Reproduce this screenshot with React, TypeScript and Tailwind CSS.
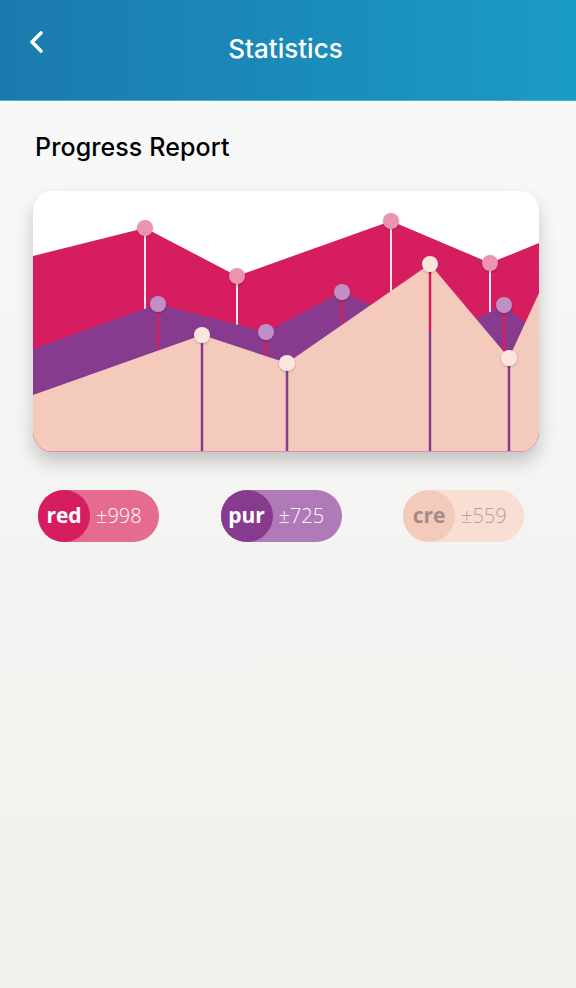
import React from "react";

const RED = "#d61d5f";
const PUR = "#873b8f";
const CRE = "#f4cabd";

function Chart() {
  const redPts = "0,65 112,37 204,85 358,30 457,72 506,52 506,261 0,261";
  const purPts = "0,158 125,113 233,141 309,101 407,146 471,114 506,144 506,261 0,261";
  const crePts = "0,204 169,144 254,172 397,73 476,167 506,102 506,261 0,261";
  const redDots: [number, number][] = [
    [112, 37],
    [204, 85],
    [358, 30],
    [457, 72],
  ];
  const purDots: [number, number][] = [
    [125, 113],
    [233, 141],
    [309, 101],
    [471, 114],
  ];
  const creDots: [number, number][] = [
    [169, 144],
    [254, 172],
    [397, 73],
    [476, 167],
  ];
  return (
    <svg width="506" height="261" viewBox="0 0 506 261" className="block">
      <defs>
        <filter id="ds" x="-50%" y="-50%" width="200%" height="200%">
          <feDropShadow dx="0" dy="1" stdDeviation="0.8" floodColor="#000" floodOpacity="0.25" />
        </filter>
      </defs>
      <rect x="0" y="0" width="506" height="261" fill="#ffffff" />
      <polygon points={redPts} fill={RED} />
      <line x1="112" y1="37" x2="112" y2="120" stroke="#fbe7ec" strokeWidth="2" />
      <line x1="204" y1="85" x2="204" y2="140" stroke="#fbe7ec" strokeWidth="2" />
      <line x1="358" y1="30" x2="358" y2="100" stroke="#fbe7ec" strokeWidth="2" />
      <line x1="457" y1="72" x2="457" y2="135" stroke="#fbe7ec" strokeWidth="2" />
      <polygon points={purPts} fill={PUR} />
      <line x1="125" y1="113" x2="125" y2="165" stroke={RED} strokeWidth="2.5" />
      <line x1="233" y1="141" x2="233" y2="172" stroke={RED} strokeWidth="2.5" />
      <line x1="309" y1="101" x2="309" y2="135" stroke={RED} strokeWidth="2.5" />
      <line x1="471" y1="114" x2="471" y2="170" stroke={RED} strokeWidth="2.5" />
      <polygon points={crePts} fill={CRE} />
      <line x1="169" y1="144" x2="169" y2="261" stroke={PUR} strokeWidth="2.5" />
      <line x1="254" y1="172" x2="254" y2="261" stroke={PUR} strokeWidth="2.5" />
      <line x1="397" y1="73" x2="397" y2="140" stroke={RED} strokeWidth="2.5" />
      <line x1="397" y1="140" x2="397" y2="261" stroke={PUR} strokeWidth="2.5" />
      <line x1="476" y1="167" x2="476" y2="261" stroke={PUR} strokeWidth="2.5" />
      {redDots.map(([x, y], i) => (
        <circle key={"r" + i} cx={x} cy={y} r="8" fill="#ec93ad" filter="url(#ds)" />
      ))}
      {purDots.map(([x, y], i) => (
        <circle key={"p" + i} cx={x} cy={y} r="8" fill="#c08fc5" filter="url(#ds)" />
      ))}
      {creDots.map(([x, y], i) => (
        <circle key={"c" + i} cx={x} cy={y} r="8" fill="#fbe6dd" filter="url(#ds)" />
      ))}
      <line x1="0" y1="260.5" x2="506" y2="260.5" stroke="#dc8bb0" strokeWidth="1" />
    </svg>
  );
}

function Pill({
  label,
  value,
  circle,
  bg,
  labelColor,
  valueColor,
}: {
  label: string;
  value: string;
  circle: string;
  bg: string;
  labelColor: string;
  valueColor: string;
}) {
  return (
    <div
      className="flex h-[52px] w-[121px] items-center rounded-full"
      style={{ backgroundColor: bg }}
    >
      <div
        className="flex h-[52px] w-[52px] shrink-0 items-center justify-center rounded-full text-[21px] font-bold"
        style={{ backgroundColor: circle, color: labelColor }}
      >
        {label}
      </div>
      <div className="ml-[6px] text-[20px] font-light" style={{ color: valueColor }}>
        {value}
      </div>
    </div>
  );
}

export default function App() {
  return (
    <div
      className="flex min-h-[988px] w-[576px] flex-col bg-gradient-to-b from-[#f8f9f9] to-[#f0f0ec]"
      style={{ fontFamily: "Inter, 'Open Sans', sans-serif" }}
    >
      <header className="relative flex h-[101px] items-start justify-center border-b border-[#52b0d6] bg-gradient-to-r from-[#1b7aad] to-[#1a9cc5]">
        <button className="absolute left-[21px] top-[24px] p-1">
          <svg width="22" height="28" viewBox="0 0 22 28">
            <polyline
              points="16,5 7,14 16,23"
              fill="none"
              stroke="#ffffff"
              strokeWidth="3.6"
              strokeLinecap="round"
              strokeLinejoin="round"
            />
          </svg>
        </button>
        <h1 className="mt-[34px] mr-[5px] text-[26px] font-medium leading-[30px] text-white">
          Statistics
        </h1>
      </header>

      <main className="flex flex-col px-[33px]">
        <h2 className="mt-[31px] pl-[2px] text-[25px] font-medium leading-[30px] tracking-[0.1px] text-black">
          Progress Report
        </h2>
        <div className="mt-[29px] w-[506px] overflow-hidden rounded-[20px] bg-white shadow-[0_10px_18px_rgba(0,0,0,0.2)]">
          <Chart />
        </div>
        <div
          className="mt-[38px] ml-[5px] flex w-[486px] justify-between"
          style={{ fontFamily: "'Open Sans', sans-serif" }}
        >
          <Pill label="red" value="±998" circle="#d61d5f" bg="#e56b8f" labelColor="#ffffff" valueColor="#ffffff" />
          <Pill label="pur" value="±725" circle="#873b8f" bg="#b07ab8" labelColor="#ffffff" valueColor="#ffffff" />
          <Pill label="cre" value="±559" circle="#f4cabd" bg="#f9ded3" labelColor="#a88a84" valueColor="#b4a19c" />
        </div>
      </main>
    </div>
  );
}
